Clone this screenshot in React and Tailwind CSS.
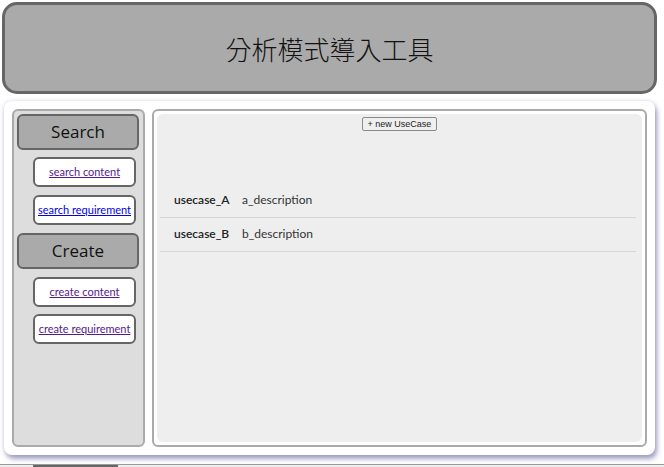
import React from "react";

const links = {
  search: [
    { label: "search content", visited: true },
    { label: "search requirement", visited: false },
  ],
  create: [
    { label: "create content", visited: true },
    { label: "create requirement", visited: true },
  ],
};

const useCases = [
  { name: "usecase_A", desc: "a_description" },
  { name: "usecase_B", desc: "b_description" },
];

const SectionButton = ({ children }) => (
  <div
    className="h-[36px] w-[122px] rounded-[6px] border-2 border-[#666] bg-[#aaa] flex items-center justify-center text-[17px] text-[#111]"
    style={{ fontFamily: "'Open Sans', 'Noto Sans', sans-serif" }}
  >
    {children}
  </div>
);

const NavLink = ({ label, visited }) => (
  <a
    href="#"
    className={`ml-[16px] h-[30px] w-[103px] rounded-[6px] border-2 border-[#666] bg-white flex items-center justify-center text-[11px] underline ${
      visited ? "text-[#551a8b]" : "text-[#0000ee]"
    }`}
    style={{ fontFamily: "Lato, 'Liberation Sans', sans-serif" }}
  >
    {label}
  </a>
);

export default function App() {
  return (
    <div className="w-[664px] h-[467px] overflow-hidden bg-white relative">
      <div className="ml-[2px] mt-[2px] w-[655px]">
        {/* Header */}
        <div className="h-[92px] rounded-[15px] border-[3px] border-[#666] bg-[#aaa] flex items-center justify-center">
          <h1
            className="text-[26px] font-light text-[#111]"
            style={{ fontFamily: "'Noto Sans CJK TC', sans-serif" }}
          >
            分析模式導入工具
          </h1>
        </div>

        {/* Body */}
        <div className="mt-[7px] ml-[2px] w-[651px] h-[354px] rounded-[8px] bg-white p-[8px] flex gap-[7px] shadow-[2px_4px_5px_rgba(90,90,150,0.55),0_0_4px_rgba(120,120,170,0.25)]">
          {/* Sidebar */}
          <div className="w-[133px] h-full rounded-[6px] border-2 border-[#aaa] bg-[#ddd] pl-[3px] pt-[3px] flex flex-col">
            <SectionButton>Search</SectionButton>
            <div className="mt-[7px] flex flex-col gap-[8px]">
              {links.search.map((l) => (
                <NavLink key={l.label} {...l} />
              ))}
            </div>
            <div className="mt-[8px]">
              <SectionButton>Create</SectionButton>
            </div>
            <div className="mt-[8px] flex flex-col gap-[7px]">
              {links.create.map((l) => (
                <NavLink key={l.label} {...l} />
              ))}
            </div>
          </div>

          {/* Main panel */}
          <div className="flex-1 h-full rounded-[6px] border-2 border-[#aaa] bg-white p-[3px]">
            <div className="h-full rounded-[6px] bg-[#eee] px-[3px] pt-[3px]">
              <div className="flex justify-center">
                <button
                  className="h-[14px] px-[5px] rounded-[2px] border border-[#8a8a8a] bg-[#efefef] text-[9px] leading-none text-[#222]"
                  style={{ fontFamily: "'Liberation Sans', Arial, sans-serif" }}
                >
                  + new UseCase
                </button>
              </div>
              <table
                className="mt-[52px] w-[476px] border-collapse text-[12px]"
                style={{ fontFamily: "Lato, 'Liberation Sans', sans-serif" }}
              >
                <tbody>
                  {useCases.map((u) => (
                    <tr key={u.name} className="h-[34px] border-b border-[#d6d6d6]">
                      <td className="w-[82px] pl-[14px] font-semibold text-[#222]">{u.name}</td>
                      <td className="text-[#333]">{u.desc}</td>
                    </tr>
                  ))}
                </tbody>
              </table>
            </div>
          </div>
        </div>
      </div>

      {/* cut-off element below */}
      <div className="absolute left-0 top-[464px] w-full h-[3px] border-t border-[#9a9a9a] bg-[#eee] flex">
        <div className="ml-[33px] w-[85px] h-full bg-[#666]"></div>
      </div>
    </div>
  );
}
